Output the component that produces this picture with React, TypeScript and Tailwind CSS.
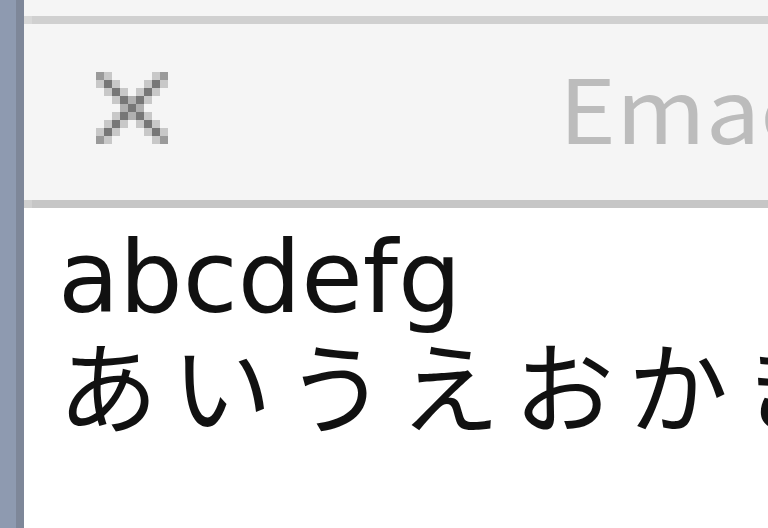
import React from "react";

// Zoomed-in Emacs window: tab bar with close button and title, buffer with two lines.
const CJK = { fontFamily: '"Noto Sans CJK JP", "Noto Sans", sans-serif' };
const LATIN = { fontFamily: '"DejaVu Sans", "Noto Sans CJK JP", sans-serif' };

// 9x9 pixel close glyph: D dark, M mid, C centre grey, L light
const X_ROWS = [
  "ML.....LM",
  "LDL...LDL",
  ".LDL.LDL.",
  "..LDCDL..",
  "...CDC...",
  "..LDCDL..",
  ".LDL.LDL.",
  "LDL...LDL",
  "ML.....LM",
];
const X_COLORS: Record<string, string> = { D: "#777777", M: "#9a9a9a", C: "#b0b0b0", L: "#c8c8c8" };

function CloseIcon() {
  return (
    <svg width="72" height="72" viewBox="0 0 72 72" shapeRendering="crispEdges" className="shrink-0">
      {X_ROWS.flatMap((row, r) =>
        row.split("").map((ch, c) =>
          ch === "." ? null : (
            <rect key={`${r}-${c}`} x={c * 8} y={r * 8} width="8" height="8" fill={X_COLORS[ch]} />
          )
        )
      )}
    </svg>
  );
}

export default function App() {
  return (
    <div className="flex h-[528px] w-[768px] overflow-hidden bg-white" style={CJK}>
      {/* window edge */}
      <div className="flex w-[24px] shrink-0">
        <div className="w-[16px] bg-[#8e9ab0]" />
        <div className="w-[8px] bg-[#7e8799]" />
      </div>

      <div className="flex min-w-0 flex-1 flex-col">
        <div className="h-[16px] bg-[#f5f5f5]" />
        <div className="flex h-[8px]">
          <div className="w-[8px] bg-[#d8d8d8]" />
          <div className="flex-1 bg-[#d0d0d0]" />
        </div>

        {/* tab bar */}
        <div className="flex h-[176px] items-start overflow-hidden bg-[#f5f5f5]">
          <div className="ml-[72px] mt-[48px]">
            <CloseIcon />
          </div>
          <div className="ml-[391px] mt-[38px] whitespace-nowrap">
            <span className="inline-block origin-left scale-x-[1.1] text-[88px] leading-[88px] text-[#bcbcbc]">
              Emacs
            </span>
          </div>
        </div>
        <div className="flex h-[8px]">
          <div className="w-[8px] bg-[#d0d0d0]" />
          <div className="flex-1 bg-[#c6c6c6]" />
        </div>

        {/* buffer */}
        <div className="flex-1 overflow-hidden bg-white pl-[34px] pt-[14px] text-[#111]">
          <div className="whitespace-nowrap text-[100px] leading-[111px]" style={LATIN}>
            abcdefg
          </div>
          <div className="whitespace-nowrap text-[100px] leading-[99px] tracking-[14px]">
            あいうえおかきくけこ
          </div>
        </div>
      </div>
    </div>
  );
}
